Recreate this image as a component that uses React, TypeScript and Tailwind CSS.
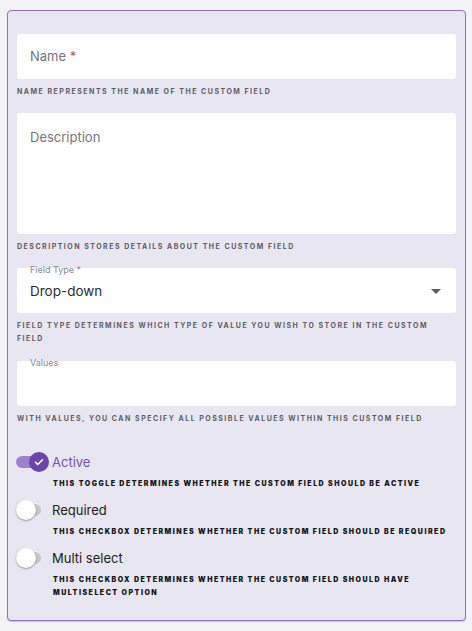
import { useState } from 'react'

function Helper({ children, dark }: { children: React.ReactNode; dark?: boolean }) {
  return (
    <p
      className={`text-[7px] leading-[13px] uppercase tracking-[1.5px] ${
        dark ? 'font-black text-[#16161e]' : 'font-bold text-[#5f5d68]'
      }`}
    >
      {children}
    </p>
  )
}

function Toggle({ on, onClick }: { on: boolean; onClick: () => void }) {
  return (
    <button type="button" onClick={onClick} className="relative w-[34px] h-[20px] shrink-0">
      <span
        className={`absolute left-0 top-[4px] w-[25px] h-[12px] rounded-full ${
          on ? 'bg-[#9b82cf]' : 'bg-[#c7c7cb]'
        }`}
      />
      {on ? (
        <span className="absolute left-[13px] top-0 w-[20px] h-[20px] rounded-full bg-[#6a44a6] flex items-center justify-center">
          <svg width="12" height="12" viewBox="0 0 24 24" fill="none" stroke="white" strokeWidth="3.2" strokeLinecap="round" strokeLinejoin="round">
            <path d="M5 12.5l4.5 4.5L19 7.5" />
          </svg>
        </span>
      ) : (
        <span className="absolute left-0 top-0 w-[20px] h-[20px] rounded-full bg-white shadow-[0_1px_2px_rgba(0,0,0,0.35)]" />
      )}
    </button>
  )
}

function ToggleRow({
  label,
  help,
  on,
  onClick,
}: {
  label: string
  help: string
  on: boolean
  onClick: () => void
}) {
  return (
    <div>
      <div className="flex items-center gap-[2px] -ml-[1px]">
        <Toggle on={on} onClick={onClick} />
        <span className={`text-[13px] leading-[20px] ${on ? 'text-[#7452b5]' : 'text-[#222]'}`}>{label}</span>
      </div>
      <div className="pl-[36px] mt-[5px]">
        <Helper dark>{help}</Helper>
      </div>
    </div>
  )
}

export default function App() {
  const [active, setActive] = useState(true)
  const [required, setRequired] = useState(false)
  const [multi, setMulti] = useState(false)

  return (
    <div className="min-h-screen bg-[#f4f4f6] pl-[7px] pt-[10px] font-['Inter',sans-serif]">
      <div className="w-[459px] h-[611px] rounded-[4px] border border-[#8f72c9] bg-[#e8e6f0] shadow-[0_1px_1px_rgba(90,60,150,0.25)] px-[9px] pt-[23px]">
        {/* Name */}
        <div className="h-[45px] rounded-[3px] bg-white flex items-center px-[13px] text-[13px] text-[#76747d]">
          Name *
        </div>
        <div className="mt-[6px]">
          <Helper>Name represents the name of the custom field</Helper>
        </div>

        {/* Description */}
        <div className="mt-[15px] h-[121px] rounded-[3px] bg-white px-[13px] pt-[15px] text-[13px] text-[#76747d]">
          Description
        </div>
        <div className="mt-[6px]">
          <Helper>Description stores details about the custom field</Helper>
        </div>

        {/* Field type */}
        <div className="relative mt-[15px] h-[45px] rounded-[3px] bg-white flex items-center justify-between px-[13px] pt-[2px]">
          <span className="absolute left-[13px] -top-[4px] text-[9px] leading-[12px] text-[#8a8891]">Field Type *</span>
          <span className="text-[13.5px] text-[#2c2b31]">Drop-down</span>
          <svg width="10" height="5" viewBox="0 0 10 5" className="mr-[2px]">
            <path d="M0 0h10L5 5z" fill="#5c5b61" />
          </svg>
        </div>
        <div className="mt-[6px]">
          <Helper>Field type determines which type of value you wish to store in the custom field</Helper>
        </div>

        {/* Values */}
        <div className="relative mt-[16px] h-[45px] rounded-[3px] bg-white">
          <span className="absolute left-[13px] -top-[4px] text-[9px] leading-[12px] text-[#8a8891]">Values</span>
        </div>
        <div className="mt-[6px]">
          <Helper>With values, you can specify all possible values within this custom field</Helper>
        </div>

        {/* Toggles */}
        <div className="mt-[27px] flex flex-col gap-[10px]">
          <ToggleRow
            label="Active"
            help="This toggle determines whether the custom field should be active"
            on={active}
            onClick={() => setActive(!active)}
          />
          <ToggleRow
            label="Required"
            help="This checkbox determines whether the custom field should be required"
            on={required}
            onClick={() => setRequired(!required)}
          />
          <ToggleRow
            label="Multi select"
            help="This checkbox determines whether the custom field should have multiselect option"
            on={multi}
            onClick={() => setMulti(!multi)}
          />
        </div>
      </div>
    </div>
  )
}
